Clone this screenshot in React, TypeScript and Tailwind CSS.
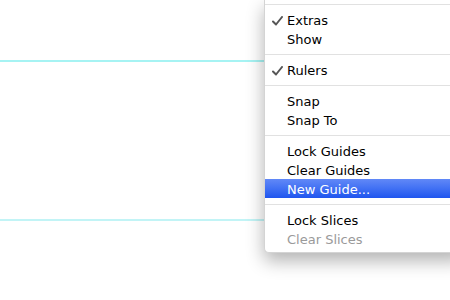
const font = { fontFamily: '"DejaVu Sans", "Lucida Grande", sans-serif' };

function Sep() {
  return (
    <div className="h-[12px] pt-[6px]">
      <div className="h-px bg-[#e1e1e1]" />
    </div>
  );
}

function Item({ label, checked, disabled, active }: { label: string; checked?: boolean; disabled?: boolean; active?: boolean }) {
  return (
    <div
      className={
        "relative flex h-[19px] items-center pl-[22px] pt-[2px] text-[13px] leading-none " +
        (active
          ? "bg-gradient-to-b from-[#6188f7] to-[#1f55ef] text-white"
          : disabled
          ? "text-[#9a9a9a]"
          : "text-black")
      }
    >
      {checked && (
        <svg className="absolute left-[7px] top-[6px]" width="11" height="10" viewBox="0 0 11 10">
          <path d="M1 5.5 L4 8.5 L10 1" fill="none" stroke="#555" strokeWidth="2" strokeLinecap="round" strokeLinejoin="round" />
        </svg>
      )}
      {label}
    </div>
  );
}

export default function App() {
  return (
    <div className="relative h-[300px] w-[450px] overflow-hidden bg-white" style={font}>
      {/* guides */}
      <div className="absolute left-0 right-0 top-[60px] h-[2px] bg-[#a6f3f3]" />
      <div className="absolute left-0 right-0 top-[219px] h-[2px] bg-[#c2f4f6]" />

      <div className="absolute left-[264px] top-0 w-[200px] rounded-bl-[5px] border-l border-b border-[#d4d4d4] bg-white pb-[4px] shadow-[0_8px_18px_rgba(0,0,0,0.3)]">
        <div className="h-[10px] pt-[4px]">
          <div className="h-px bg-[#e1e1e1]" />
        </div>
        <Item label="Extras" checked />
        <Item label="Show" />
        <Sep />
        <Item label="Rulers" checked />
        <Sep />
        <Item label="Snap" />
        <Item label="Snap To" />
        <Sep />
        <Item label="Lock Guides" />
        <Item label="Clear Guides" />
        <Item label="New Guide..." active />
        <Sep />
        <Item label="Lock Slices" />
        <Item label="Clear Slices" disabled />
      </div>
    </div>
  );
}
